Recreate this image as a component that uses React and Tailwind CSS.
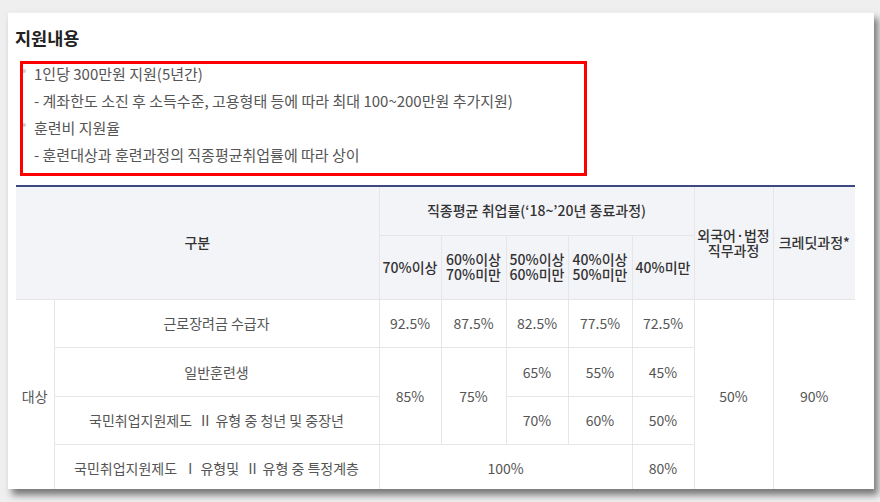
import React from 'react';

const th = 'border border-[#e6e6e6] text-center align-middle font-medium text-[14px] text-[#333] leading-[15px] px-0';
const td = 'border border-[#e6e6e6] text-center align-middle text-[14px] text-[#555] leading-[16px] px-0';

const bullets = [
  { dot: true, text: '1인당 300만원 지원(5년간)' },
  { dot: false, text: '- 계좌한도 소진 후 소득수준, 고용형태 등에 따라 최대 100~200만원 추가지원)' },
  { dot: true, text: '훈련비 지원율' },
  { dot: false, text: '- 훈련대상과 훈련과정의 직종평균취업률에 따라 상이' },
];

const App = () => {
  return (
    <div className="w-[880px] h-[502px] overflow-hidden bg-[#efefef] pt-[12px] pl-[8px] font-['Noto_Sans_CJK_KR','Noto_Sans',sans-serif]">
      <div className="relative w-[866px] h-[477px] bg-white border-t border-[#eceef3] shadow-[4px_6px_7px_rgba(0,0,0,0.5)] overflow-hidden pt-[13px] pl-[7px]">
        <h2 className="text-[17.5px] leading-[24px] font-semibold text-[#222]">지원내용</h2>

        <ul className="mt-[10px] pl-[19px]">
          {bullets.map((b, i) => (
            <li key={i} className="relative text-[15px] leading-[27px] text-[#555]">
              {b.dot && <span className="absolute left-[-12px] top-[9px] w-[4px] h-[4px] rounded-full bg-[#cfcfcf]" />}
              {b.text}
            </li>
          ))}
        </ul>

        {/* red highlight box drawn over the list */}
        <div className="absolute left-[12px] top-[48px] w-[567px] h-[115px] border-[3px] border-[#ff0000]" />

        <table className="mt-[17px] ml-[1px] w-[839px] table-fixed border-collapse">
          <colgroup>
            <col className="w-[38px]" />
            <col className="w-[325px]" />
            <col className="w-[62px]" />
            <col className="w-[65px]" />
            <col className="w-[62px]" />
            <col className="w-[64px]" />
            <col className="w-[62px]" />
            <col className="w-[79px]" />
            <col className="w-[82px]" />
          </colgroup>
          <thead className="bg-[#f3f4f8]">
            <tr className="h-[49px]">
              <th colSpan={2} rowSpan={2} className={`${th} border-l-0 border-t-2 border-t-[#3d4880]`}>구분</th>
              <th colSpan={5} className={`${th} border-t-2 border-t-[#3d4880]`}>직종평균 취업률(‘18~’20년 종료과정)</th>
              <th rowSpan={2} className={`${th} border-t-2 border-t-[#3d4880]`}>외국어·법정<br />직무과정</th>
              <th rowSpan={2} className={`${th} border-r-0 border-t-2 border-t-[#3d4880]`}>크레딧과정*</th>
            </tr>
            <tr className="h-[64px]">
              <th className={th}>70%이상</th>
              <th className={th}>60%이상<br />70%미만</th>
              <th className={th}>50%이상<br />60%미만</th>
              <th className={th}>40%이상<br />50%미만</th>
              <th className={th}>40%미만</th>
            </tr>
          </thead>
          <tbody>
            <tr className="h-[48px]">
              <td rowSpan={4} className={`${td} border-l-0`}>대상</td>
              <td className={td}>근로장려금 수급자</td>
              <td className={td}>92.5%</td>
              <td className={td}>87.5%</td>
              <td className={td}>82.5%</td>
              <td className={td}>77.5%</td>
              <td className={td}>72.5%</td>
              <td rowSpan={4} className={td}>50%</td>
              <td rowSpan={4} className={`${td} border-r-0`}>90%</td>
            </tr>
            <tr className="h-[49px]">
              <td className={td}>일반훈련생</td>
              <td rowSpan={2} className={td}>85%</td>
              <td rowSpan={2} className={td}>75%</td>
              <td className={td}>65%</td>
              <td className={td}>55%</td>
              <td className={td}>45%</td>
            </tr>
            <tr className="h-[48px]">
              <td className={`${td} whitespace-pre`}>국민취업지원제도  Ⅱ 유형 중 청년 및 중장년</td>
              <td className={td}>70%</td>
              <td className={td}>60%</td>
              <td className={td}>50%</td>
            </tr>
            <tr className="h-[48px]">
              <td className={`${td} whitespace-pre`}>국민취업지원제도  Ⅰ 유형및  Ⅱ 유형 중 특정계층</td>
              <td colSpan={4} className={td}>100%</td>
              <td className={td}>80%</td>
            </tr>
          </tbody>
        </table>
      </div>
    </div>
  );
};

export default App;
